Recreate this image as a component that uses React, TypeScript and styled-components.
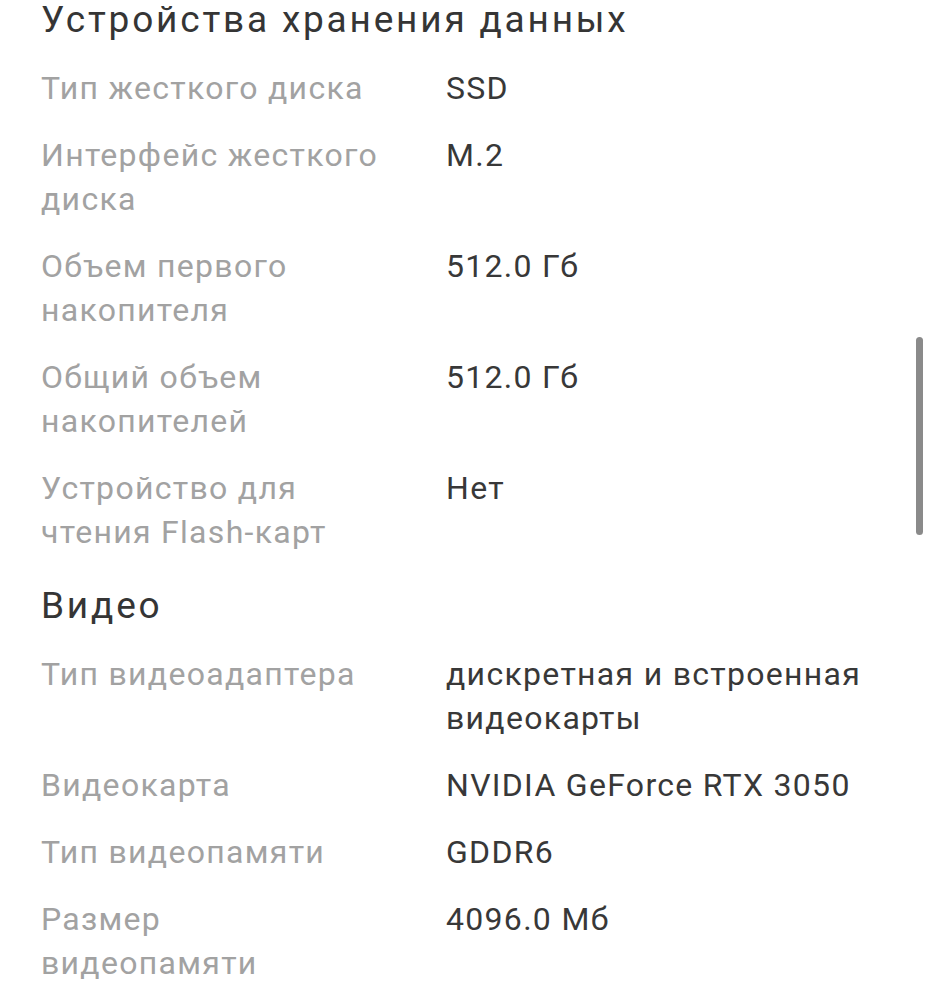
import { FC } from 'react'
import styled, { createGlobalStyle } from 'styled-components'

type Spec = { label: string; value: string }
type Section = { title: string; specs: Spec[] }

const sections: Section[] = [
	{
		title: 'Устройства хранения данных',
		specs: [
			{ label: 'Тип жесткого диска', value: 'SSD' },
			{ label: 'Интерфейс жесткого диска', value: 'M.2' },
			{ label: 'Объем первого накопителя', value: '512.0 Гб' },
			{ label: 'Общий объем накопителей', value: '512.0 Гб' },
			{ label: 'Устройство для чтения Flash-карт', value: 'Нет' },
		],
	},
	{
		title: 'Видео',
		specs: [
			{ label: 'Тип видеоадаптера', value: 'дискретная и встроенная видеокарты' },
			{ label: 'Видеокарта', value: 'NVIDIA GeForce RTX 3050' },
			{ label: 'Тип видеопамяти', value: 'GDDR6' },
			{ label: 'Размер видеопамяти', value: '4096.0 Мб' },
		],
	},
]

const GlobalStyle = createGlobalStyle`
	html, body {
		margin: 0;
		padding: 0;
		background: #ffffff;
	}
	body {
		font-family: Roboto, 'Noto Sans', sans-serif;
		-webkit-font-smoothing: antialiased;
	}
`

const App: FC = () => (
	<>
		<GlobalStyle />
		<Screen>
			{sections.map((section) => (
				<Block key={section.title}>
					<Title>{section.title}</Title>
					<SpecList>
						{section.specs.map((spec) => (
							<SpecRow key={spec.label}>
								<Label>{spec.label}</Label>
								<Value>{spec.value}</Value>
							</SpecRow>
						))}
					</SpecList>
				</Block>
			))}
			<ScrollThumb />
		</Screen>
	</>
)

export default App

const Screen = styled.div`
	position: relative;
	width: 931px;
	height: 1000px;
	overflow: hidden;
	box-sizing: border-box;
	padding: 0 30px 0 41px;
	display: flex;
	flex-direction: column;
	gap: 32px;
`

const Block = styled.section`
	display: flex;
	flex-direction: column;
	gap: 26px;
`

const Title = styled.h2`
	margin: 0;
	font-size: 37px;
	font-weight: 400;
	line-height: 40px;
	letter-spacing: 2.8px;
	color: #353535;
`

const SpecList = styled.div`
	display: flex;
	flex-direction: column;
	gap: 23px;
`

const SpecRow = styled.div`
	display: grid;
	grid-template-columns: 340px 1fr;
	column-gap: 65px;
	font-size: 32px;
	line-height: 44px;
	letter-spacing: 1.3px;
`

const Label = styled.div`
	color: #a2a2a2;
`

const Value = styled.div`
	color: #383838;
`

const ScrollThumb = styled.div`
	position: absolute;
	right: 8px;
	top: 337px;
	width: 7px;
	height: 198px;
	border-radius: 4px;
	background: #8a8a8a;
`
